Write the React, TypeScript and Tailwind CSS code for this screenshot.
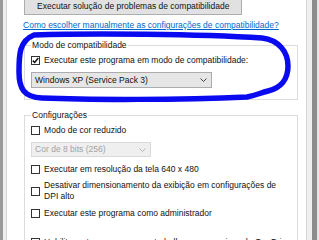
import React from "react";

function Check({ checked = false }: { checked?: boolean }) {
  return (
    <div className="w-[9px] h-[9px] shrink-0 border border-[#333] bg-white flex items-center justify-center">
      {checked && (
        <svg width="7" height="7" viewBox="0 0 7 7">
          <path d="M0.8 3.6 L2.7 5.5 L6.3 1" fill="none" stroke="#111" strokeWidth="1.5" />
        </svg>
      )}
    </div>
  );
}

function Chevron({ color }: { color: string }) {
  return (
    <svg width="7" height="4" viewBox="0 0 7 4">
      <path d="M0.5 0.5 L3.5 3.5 L6.5 0.5" fill="none" stroke={color} strokeWidth="1" />
    </svg>
  );
}

export default function App() {
  return (
    <div className="w-[319px] h-[240px] overflow-hidden relative flex bg-white font-['Liberation_Sans',Arial,sans-serif] text-[8.5px] leading-[11px] text-[#111]">
      <div className="w-[3px] bg-[#9a9a9a]" />
      <div className="w-[4px] bg-[#efefef]" />
      <div className="w-px bg-[#d4d4d4]" />
      <div className="flex-1 flex flex-col pl-[16px] pr-[8px]">
        <div className="shrink-0 self-start ml-[1px] -mt-[3px] h-[18px] px-[12px] border border-[#adadad] bg-[#e1e1e1] flex items-center whitespace-nowrap">
          Executar solução de problemas de compatibilidade
        </div>
        <div className="shrink-0 mt-[5px] text-[#0066cc] underline whitespace-nowrap">
          Como escolher manualmente as configurações de compatibilidade?
        </div>
        <fieldset className="shrink-0 ml-[1px] mt-[9px] border border-[#dcdcdc] pl-[6px] pr-[6px] pb-[11px]">
          <legend className="px-[1px]">Modo de compatibilidade</legend>
          <div className="mt-[4px] flex items-center gap-[4px] whitespace-nowrap">
            <Check checked />
            <span>Executar este programa em modo de compatibilidade:</span>
          </div>
          <div className="mt-[6px] w-[181px] h-[16px] border border-[#acacac] bg-[#e6e6e6] flex items-center justify-between pl-[3px] pr-[4px]">
            <span className="whitespace-nowrap">Windows XP (Service Pack 3)</span>
            <Chevron color="#444" />
          </div>
        </fieldset>
        <fieldset className="shrink-0 ml-[1px] mt-[10px] border border-[#dcdcdc] pl-[6px] pr-[6px] pb-[11px]">
          <legend className="px-[1px]">Configurações</legend>
          <div className="mt-[4px] flex items-center gap-[4px] whitespace-nowrap">
            <Check />
            <span>Modo de cor reduzido</span>
          </div>
          <div className="mt-[6px] w-[120px] h-[15px] border border-[#d9d9d9] bg-[#efefef] flex items-center justify-between pl-[3px] pr-[4px] text-[#a3a3a3]">
            <span className="whitespace-nowrap">Cor de 8 bits (256)</span>
            <Chevron color="#b5b5b5" />
          </div>
          <div className="mt-[7px] flex items-center gap-[4px] whitespace-nowrap">
            <Check />
            <span>Executar em resolução da tela 640 x 480</span>
          </div>
          <div className="mt-[5px] flex items-center gap-[4px] whitespace-nowrap">
            <Check />
            <span>
              Desativar dimensionamento da exibição em configurações de
              <br />
              DPI alto
            </span>
          </div>
          <div className="mt-[6px] flex items-center gap-[4px] whitespace-nowrap">
            <Check />
            <span>Executar este programa como administrador</span>
          </div>
          <div className="mt-[18px] flex items-center gap-[4px] whitespace-nowrap">
            <Check />
            <span>Habilitar este programa para trabalhar com arquivos do OneDrive</span>
          </div>
        </fieldset>
      </div>
      <div className="w-px bg-[#d4d4d4]" />
      <div className="w-[6px] bg-[#efefef]" />
      <div className="w-[6px] bg-[#8c8c8c]" />
      <div className="w-[2px] bg-[#e6e6e6]" />
      <svg
        className="absolute left-0 top-0 pointer-events-none"
        width="319"
        height="240"
        viewBox="0 0 319 240"
      >
        <path
          d="M34 35 C90 33 200 34 262 38 C279 40 288 52 288 66 C288 79 281 88 268 91 C260 93 257 95 247 97 C180 100 90 100 42 98 C24 97 19 89 19 72 C19 55 19 41 34 35 Z"
          fill="none"
          stroke="#0a0af0"
          strokeWidth="5.5"
          strokeLinejoin="round"
        />
      </svg>
    </div>
  );
}
